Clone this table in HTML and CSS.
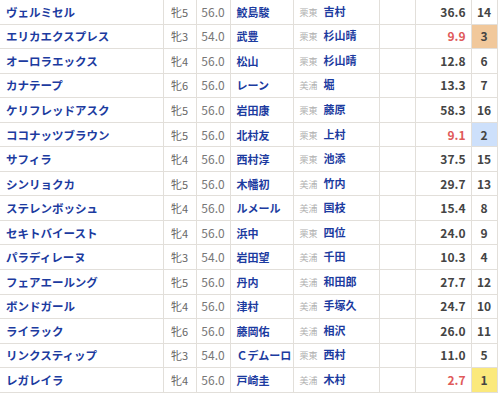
FILE: index.html
```html
<!DOCTYPE html>
<html lang="ja">
<head>
<meta charset="utf-8">
<link rel="stylesheet" href="styles.css">
</head>
<body>
<table class="entries">
<colgroup>
<col class="c-name"><col class="c-sex"><col class="c-wt"><col class="c-jk"><col class="c-tr"><col class="c-blank"><col class="c-odds"><col class="c-rank">
</colgroup>
<tbody>
<tr><td class="name">ヴェルミセル</td><td class="sex">牝5</td><td class="wt">56.0</td><td class="jk">鮫島駿</td><td class="tr"><span class="ba">栗東</span>吉村</td><td></td><td class="odds">36.6</td><td class="rank">14</td></tr>
<tr><td class="name">エリカエクスプレス</td><td class="sex">牝3</td><td class="wt">54.0</td><td class="jk">武豊</td><td class="tr"><span class="ba">栗東</span>杉山晴</td><td></td><td class="odds low">9.9</td><td class="rank r3">3</td></tr>
<tr><td class="name">オーロラエックス</td><td class="sex">牝4</td><td class="wt">56.0</td><td class="jk">松山</td><td class="tr"><span class="ba">栗東</span>杉山晴</td><td></td><td class="odds">12.8</td><td class="rank">6</td></tr>
<tr><td class="name">カナテープ</td><td class="sex">牝6</td><td class="wt">56.0</td><td class="jk">レーン</td><td class="tr"><span class="ba">美浦</span>堀</td><td></td><td class="odds">13.3</td><td class="rank">7</td></tr>
<tr><td class="name">ケリフレッドアスク</td><td class="sex">牝5</td><td class="wt">56.0</td><td class="jk">岩田康</td><td class="tr"><span class="ba">栗東</span>藤原</td><td></td><td class="odds">58.3</td><td class="rank">16</td></tr>
<tr><td class="name">ココナッツブラウン</td><td class="sex">牝5</td><td class="wt">56.0</td><td class="jk">北村友</td><td class="tr"><span class="ba">栗東</span>上村</td><td></td><td class="odds low">9.1</td><td class="rank r2">2</td></tr>
<tr><td class="name">サフィラ</td><td class="sex">牝4</td><td class="wt">56.0</td><td class="jk">西村淳</td><td class="tr"><span class="ba">栗東</span>池添</td><td></td><td class="odds">37.5</td><td class="rank">15</td></tr>
<tr><td class="name">シンリョクカ</td><td class="sex">牝5</td><td class="wt">56.0</td><td class="jk">木幡初</td><td class="tr"><span class="ba">美浦</span>竹内</td><td></td><td class="odds">29.7</td><td class="rank">13</td></tr>
<tr><td class="name">ステレンボッシュ</td><td class="sex">牝4</td><td class="wt">56.0</td><td class="jk">ルメール</td><td class="tr"><span class="ba">美浦</span>国枝</td><td></td><td class="odds">15.4</td><td class="rank">8</td></tr>
<tr><td class="name">セキトバイースト</td><td class="sex">牝4</td><td class="wt">56.0</td><td class="jk">浜中</td><td class="tr"><span class="ba">栗東</span>四位</td><td></td><td class="odds">24.0</td><td class="rank">9</td></tr>
<tr><td class="name">パラディレーヌ</td><td class="sex">牝3</td><td class="wt">54.0</td><td class="jk">岩田望</td><td class="tr"><span class="ba">美浦</span>千田</td><td></td><td class="odds">10.3</td><td class="rank">4</td></tr>
<tr><td class="name">フェアエールング</td><td class="sex">牝5</td><td class="wt">56.0</td><td class="jk">丹内</td><td class="tr"><span class="ba">美浦</span>和田郎</td><td></td><td class="odds">27.7</td><td class="rank">12</td></tr>
<tr><td class="name">ボンドガール</td><td class="sex">牝4</td><td class="wt">56.0</td><td class="jk">津村</td><td class="tr"><span class="ba">美浦</span>手塚久</td><td></td><td class="odds">24.7</td><td class="rank">10</td></tr>
<tr><td class="name">ライラック</td><td class="sex">牝6</td><td class="wt">56.0</td><td class="jk">藤岡佑</td><td class="tr"><span class="ba">美浦</span>相沢</td><td></td><td class="odds">26.0</td><td class="rank">11</td></tr>
<tr><td class="name">リンクスティップ</td><td class="sex">牝3</td><td class="wt">54.0</td><td class="jk">Ｃデムーロ</td><td class="tr"><span class="ba">栗東</span>西村</td><td></td><td class="odds">11.0</td><td class="rank">5</td></tr>
<tr><td class="name">レガレイラ</td><td class="sex">牝4</td><td class="wt">56.0</td><td class="jk">戸崎圭</td><td class="tr"><span class="ba">美浦</span>木村</td><td></td><td class="odds low">2.7</td><td class="rank r1">1</td></tr>
</tbody>
</table>
</body>
</html>
```
FILE: styles.css
```css
html, body {
  margin: 0;
  padding: 0;
  background: #fff;
}
body {
  font-family: "Noto Sans CJK JP", sans-serif;
  font-size: 12px;
}
.entries {
  border-collapse: collapse;
  table-layout: fixed;
  width: 497px;
  margin-top: -1px;
}
.c-name { width: 163px; }
.c-sex { width: 33px; }
.c-wt { width: 34px; }
.c-jk { width: 63px; }
.c-tr { width: 86px; }
.c-blank { width: 36px; }
.c-odds { width: 56px; }
.c-rank { width: 26px; }
.entries td {
  border: 1px solid #e2dfda;
  height: 23.55px;
  padding: 0 5px;
  white-space: nowrap;
  overflow: hidden;
  vertical-align: middle;
  line-height: 16px;
}
.entries tr td:first-child { border-left: none; }
.name {
  font-weight: bold;
  color: #1c3ba0;
  font-size: 11.5px;
}
.entries td.name { padding-left: 6px; }
.sex {
  text-align: center;
  color: #666;
  font-size: 11px;
}
.wt {
  text-align: center;
  color: #777;
  font-size: 12px;
}
.entries td.sex, .entries td.wt { padding: 0; }
.jk {
  font-weight: bold;
  color: #1c3ba0;
  font-size: 11px;
}
.entries td.jk { padding-left: 6px; }
.tr {
  font-weight: bold;
  color: #1c3ba0;
  font-size: 11px;
}
.entries td.tr { padding-left: 6px; }
.ba {
  font-weight: normal;
  color: #b0b0b0;
  font-size: 9px;
  margin-right: 6px;
}
.odds {
  text-align: right;
  font-weight: bold;
  color: #444;
  font-size: 12px;
}
.odds.low { color: #e05a5a; }
.rank {
  text-align: center;
  font-weight: bold;
  color: #444;
  font-size: 12px;
}
.entries td.rank { padding: 0; }
.r1 { background: #fbe97c; }
.r2 { background: #cde0fb; }
.r3 { background: #f1c89b; }
```
